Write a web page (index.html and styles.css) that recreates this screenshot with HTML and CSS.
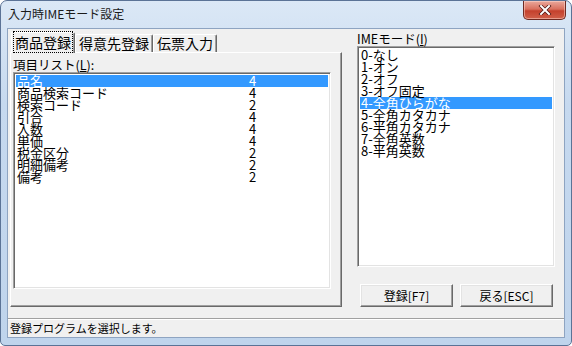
FILE: index.html
```html
<html>
<head>
  <meta charset="UTF-8">
  <title>入力時IMEモード設定</title>
  <link rel="stylesheet" href="styles.css">
</head>
<body>
  <div class="window">
    <div class="titlebar">
      <span class="title">入力時IMEモード設定</span>
      <button class="close" aria-label="閉じる">
        <svg width="14" height="10" viewBox="0 0 14 10">
          <path d="M3 1 L11 9 M11 1 L3 9" stroke="#4a1410" stroke-width="3.4" stroke-linecap="square"/>
          <path d="M3 1 L11 9 M11 1 L3 9" stroke="#ffffff" stroke-width="2" stroke-linecap="square"/>
        </svg>
      </button>
    </div>

    <div class="client">
      <div class="content">
        <div class="tab-area">
          <div class="tabs">
            <div class="tab active"><span class="focus">商品登録</span></div>
            <div class="tab">得意先登録</div>
            <div class="tab">伝票入力</div>
          </div>
          <div class="panel">
            <div class="label">項目リスト(<u>L</u>):</div>
            <ul class="listbox items">
              <li class="selected"><span class="name">品名</span><span>4</span></li>
              <li><span class="name">商品検索コード</span><span>4</span></li>
              <li><span class="name">検索コード</span><span>2</span></li>
              <li><span class="name">引合</span><span>4</span></li>
              <li><span class="name">入数</span><span>4</span></li>
              <li><span class="name">単価</span><span>4</span></li>
              <li><span class="name">税金区分</span><span>2</span></li>
              <li><span class="name">明細備考</span><span>2</span></li>
              <li><span class="name">備考</span><span>2</span></li>
            </ul>
          </div>
        </div>

        <div class="side">
          <div class="label">IMEモード(<u>I</u>)</div>
          <ul class="listbox modes">
            <li>0-なし</li>
            <li>1-オン</li>
            <li>2-オフ</li>
            <li>3-オフ固定</li>
            <li class="selected">4-全角ひらがな</li>
            <li>5-全角カタカナ</li>
            <li>6-半角カタカナ</li>
            <li>7-全角英数</li>
            <li>8-半角英数</li>
          </ul>
          <div class="buttons">
            <button class="btn">登録[F7]</button>
            <button class="btn">戻る[ESC]</button>
          </div>
        </div>
      </div>

      <div class="statusbar">登録プログラムを選択します。</div>
    </div>
  </div>
</body>
</html>
```

FILE: styles.css
```css
body {
    margin: 0;
    padding: 0;
    width: 572px;
    height: 346px;
    overflow: hidden;
    background-color: #ffffff;
    font-family: "Noto Sans CJK JP", "DejaVu Sans", sans-serif;
    color: #000000;
}

ul {
    margin: 0;
    padding: 0;
    list-style: none;
}

/* Window frame */
.window {
    width: 572px;
    height: 346px;
    box-sizing: border-box;
    border: 1px solid #5b7396;
    border-radius: 7px 7px 5px 5px;
    background: linear-gradient(180deg, #dbe8f6 0%, #c6d9ef 30%, #bfd4ec 100%);
    display: flex;
    flex-direction: column;
}

.titlebar {
    height: 27px;
    display: flex;
    align-items: flex-start;
    padding-left: 7px;
}

.title {
    font-size: 12px;
    line-height: 12px;
    margin-top: 7px;
    color: #1a1a1a;
}

.close {
    margin-left: auto;
    margin-right: 5px;
    width: 43px;
    height: 19px;
    padding: 0;
    border: 1px solid #6e2a22;
    border-top: none;
    border-radius: 0 0 5px 5px;
    background: linear-gradient(180deg, #eaa99c 0%, #d9705e 45%, #c4412d 55%, #d0604a 100%);
    box-shadow: inset 0 0 0 1px rgba(255, 220, 210, 0.5);
    display: flex;
    justify-content: center;
    align-items: center;
}

/* Client area */
.client {
    flex: 1;
    margin: 0 6px 7px 6px;
    border: 1px solid #8ea4c1;
    background-color: #f0f0f0;
    display: flex;
    flex-direction: column;
}

.content {
    height: 289px;
    display: flex;
}

/* Tab control */
.tab-area {
    margin: 3px 0 0 2px;
}

.tabs {
    display: flex;
    align-items: flex-end;
    height: 20px;
    padding-left: 1px;
}

.tab {
    height: 17px;
    font-size: 14px;
    line-height: 17px;
    padding: 0 3px;
    border-top: 1px solid #ffffff;
    border-left: 1px solid #ffffff;
    border-right: 1px solid #696969;
    box-shadow: inset -1px 0 0 #a0a0a0;
    border-radius: 2px 2px 0 0;
}

.tab.active {
    height: 20px;
    line-height: 19px;
    position: relative;
    margin-bottom: -1px;
    background-color: #f0f0f0;
    padding: 0 2px;
}

.focus {
    outline: 1px dotted #000000;
    outline-offset: 0;
    padding: 0 1px;
}

.panel {
    width: 332px;
    height: 255px;
    box-sizing: border-box;
    border-top: 1px solid #ffffff;
    border-left: 1px solid #ffffff;
    border-right: 1px solid #696969;
    border-bottom: 1px solid #696969;
    box-shadow: inset -1px -1px 0 #a0a0a0;
    padding: 4px 0 0 2px;
}

.label {
    font-size: 12.5px;
    line-height: 15px;
    height: 15px;
}

.label u {
    text-decoration: underline;
}

/* List boxes */
.listbox {
    box-sizing: border-box;
    background-color: #ffffff;
    border: 1px solid;
    border-color: #a0a0a0 #ffffff #ffffff #a0a0a0;
    box-shadow: inset 1px 1px 0 #696969, inset -1px -1px 0 #e3e3e3;
    padding: 2px 2px 0 2px;
    font-size: 13px;
}

.listbox li {
    height: 12px;
    line-height: 12px;
    padding-left: 1px;
    white-space: nowrap;
    display: flex;
}

.listbox li.selected {
    background-color: #3399ff;
    color: #ffffff;
}

.items {
    width: 318px;
    height: 217px;
}

.items .name {
    width: 232px;
}

/* Right column */
.side {
    margin-left: 15px;
    padding-top: 2px;
}

.modes {
    width: 198px;
    height: 221px;
}

.buttons {
    display: flex;
    gap: 7px;
    margin-top: 17px;
    padding-left: 3px;
}

.btn {
    width: 93px;
    height: 23px;
    padding: 0;
    font-family: "Noto Sans CJK JP", "DejaVu Sans", sans-serif;
    font-size: 12px;
    background-color: #f0f0f0;
    border: 1px solid;
    border-color: #ffffff #696969 #696969 #ffffff;
    box-shadow: inset -1px -1px 0 #a0a0a0, inset 1px 1px 0 #e3e3e3;
    color: #000000;
}

/* Status bar */
.statusbar {
    flex: 1;
    border-top: 1px solid #a0a0a0;
    box-shadow: inset 0 1px 0 #ffffff;
    font-size: 11px;
    line-height: 18px;
    padding-left: 2px;
}
```
